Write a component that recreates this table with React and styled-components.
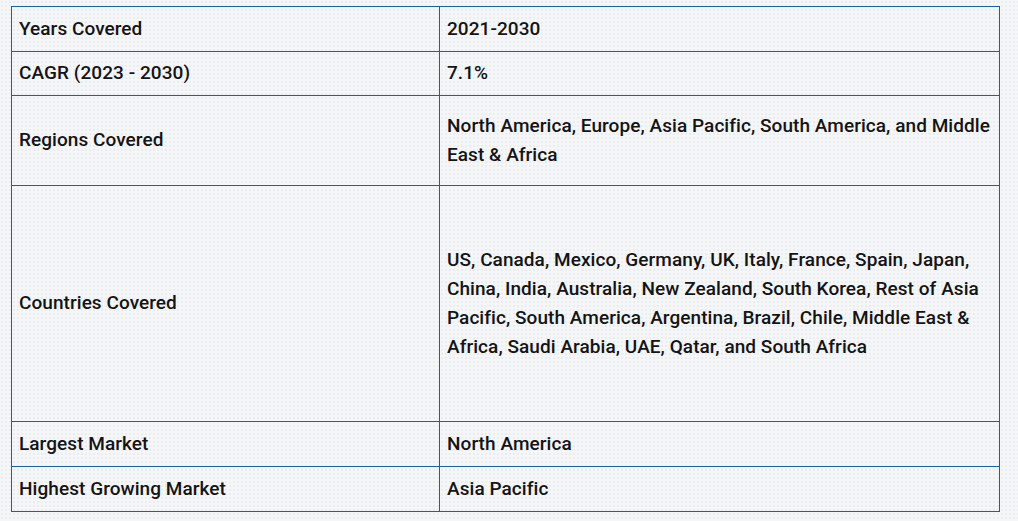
import React from 'react';
import styled, { createGlobalStyle } from 'styled-components';

const rows = [
  { label: 'Years Covered', value: '2021-2030', height: 44 },
  { label: 'CAGR (2023 - 2030)', value: '7.1%', height: 43 },
  { label: 'Regions Covered', value: 'North America, Europe, Asia Pacific, South America, and Middle East & Africa', height: 89 },
  {
    label: 'Countries Covered',
    value: 'US, Canada, Mexico, Germany, UK, Italy, France, Spain, Japan, China, India, Australia, New Zealand, South Korea, Rest of Asia Pacific, South America, Argentina, Brazil, Chile, Middle East & Africa, Saudi Arabia, UAE, Qatar, and South Africa',
    height: 235,
  },
  { label: 'Largest Market', value: 'North America', height: 44 },
  { label: 'Highest Growing Market', value: 'Asia Pacific', height: 44 },
];

const GlobalStyle = createGlobalStyle`
  html, body {
    margin: 0;
    padding: 0;
  }
  body {
    background-color: #f5f6f8;
    background-image: radial-gradient(#eaecef 1px, transparent 1px);
    background-size: 4px 4px;
    font-family: Roboto, "Liberation Sans", sans-serif;
  }
`;

const Page = styled.div`
  padding: 6px 0 0 11px;
  height: 521px;
  box-sizing: border-box;
`;

const Table = styled.div`
  width: 989px;
  box-sizing: border-box;
  border: 1px solid #1565a6;
  display: flex;
  flex-direction: column;
`;

const Row = styled.div`
  display: grid;
  grid-template-columns: 428px 1fr;
  min-height: ${p => p.h}px;
  border-top: ${p => (p.first ? 'none' : '1px solid #1565a6')};
`;

const Cell = styled.div`
  display: flex;
  align-items: center;
  padding: 0 7px 2px;
  font-size: 19px;
  font-weight: 500;
  letter-spacing: 0.06px;
  line-height: 29px;
  color: #141414;
  border-right: ${p => (p.label ? '1px solid #1565a6' : 'none')};
`;

export default function App() {
  return (
    <>
      <GlobalStyle />
      <Page>
        <Table>
          {rows.map((r, i) => (
            <Row key={r.label} h={r.height} first={i === 0}>
              <Cell label>{r.label}</Cell>
              <Cell>{r.value}</Cell>
            </Row>
          ))}
        </Table>
      </Page>
    </>
  );
}
